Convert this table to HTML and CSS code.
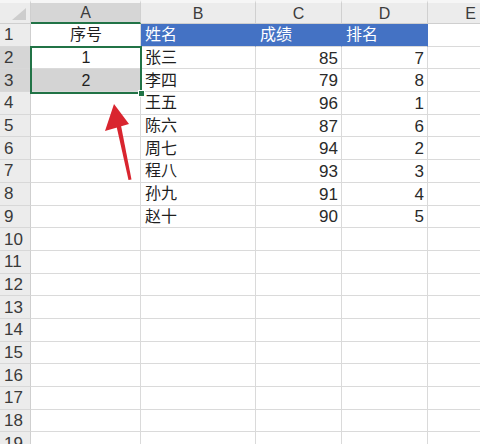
FILE: index.html
```html
<!DOCTYPE html>
<html lang="zh">
<head>
<meta charset="utf-8">
<link rel="stylesheet" href="styles.css">
</head>
<body>
<div class="sheet">
  <div class="grid">
    <div class="corner"><span class="tri"></span></div>
    <div class="ch sel">A</div><div class="ch">B</div><div class="ch">C</div><div class="ch">D</div><div class="ch">E</div>

    <div class="rh">1</div><div class="c ctr">序号</div><div class="c blue">姓名</div><div class="c blue">成绩</div><div class="c blue">排名</div><div class="c"></div>
    <div class="rh sel">2</div><div class="c ctr">1</div><div class="c">张三</div><div class="c num">85</div><div class="c num">7</div><div class="c"></div>
    <div class="rh sel">3</div><div class="c ctr shade">2</div><div class="c">李四</div><div class="c num">79</div><div class="c num">8</div><div class="c"></div>
    <div class="rh">4</div><div class="c"></div><div class="c">王五</div><div class="c num">96</div><div class="c num">1</div><div class="c"></div>
    <div class="rh">5</div><div class="c"></div><div class="c">陈六</div><div class="c num">87</div><div class="c num">6</div><div class="c"></div>
    <div class="rh">6</div><div class="c"></div><div class="c">周七</div><div class="c num">94</div><div class="c num">2</div><div class="c"></div>
    <div class="rh">7</div><div class="c"></div><div class="c">程八</div><div class="c num">93</div><div class="c num">3</div><div class="c"></div>
    <div class="rh">8</div><div class="c"></div><div class="c">孙九</div><div class="c num">91</div><div class="c num">4</div><div class="c"></div>
    <div class="rh">9</div><div class="c"></div><div class="c">赵十</div><div class="c num">90</div><div class="c num">5</div><div class="c"></div>
    <div class="rh">10</div><div class="c"></div><div class="c"></div><div class="c"></div><div class="c"></div><div class="c"></div>
    <div class="rh">11</div><div class="c"></div><div class="c"></div><div class="c"></div><div class="c"></div><div class="c"></div>
    <div class="rh">12</div><div class="c"></div><div class="c"></div><div class="c"></div><div class="c"></div><div class="c"></div>
    <div class="rh">13</div><div class="c"></div><div class="c"></div><div class="c"></div><div class="c"></div><div class="c"></div>
    <div class="rh">14</div><div class="c"></div><div class="c"></div><div class="c"></div><div class="c"></div><div class="c"></div>
    <div class="rh">15</div><div class="c"></div><div class="c"></div><div class="c"></div><div class="c"></div><div class="c"></div>
    <div class="rh">16</div><div class="c"></div><div class="c"></div><div class="c"></div><div class="c"></div><div class="c"></div>
    <div class="rh">17</div><div class="c"></div><div class="c"></div><div class="c"></div><div class="c"></div><div class="c"></div>
    <div class="rh">18</div><div class="c"></div><div class="c"></div><div class="c"></div><div class="c"></div><div class="c"></div>
    <div class="rh">19</div><div class="c"></div><div class="c"></div><div class="c"></div><div class="c"></div><div class="c"></div>
  </div>

  <div class="selection"><span class="handle"></span></div>

  <svg class="arrow" width="480" height="444" viewBox="0 0 480 444">
    <path d="M128.5 180 L116 124 L120.5 123 L131.5 179.5 Z" fill="#d9252f"/>
    <path d="M114 104 L105 131 L129 124 Z" fill="#d9252f"/>
  </svg>
</div>
</body>
</html>
```

FILE: styles.css
```css
* { box-sizing: border-box; }
html, body {
  margin: 0;
  padding: 0;
  background: #ffffff;
  overflow: hidden;
}
body {
  width: 480px;
  height: 444px;
  font-family: "Liberation Sans", "Noto Sans CJK SC", sans-serif;
  color: #1f1f1f;
}
.sheet {
  position: relative;
  width: 480px;
  height: 444px;
  overflow: hidden;
}
.grid {
  display: grid;
  grid-template-columns: 31px 110px 115px 86px 86px 86px;
  grid-template-rows: 24px;
  grid-auto-rows: 22.7px;
  width: 514px;
}
.corner {
  background: #ececec;
  border-right: 1px solid #cfcfcf;
  border-bottom: 1px solid #cfcfcf;
  border-top: 3px solid #f6f6f6;
  position: relative;
}
.tri {
  position: absolute;
  right: 4px;
  bottom: 3px;
  width: 0;
  height: 0;
  border-left: 14px solid transparent;
  border-bottom: 12px solid #cdcdcd;
}
.ch {
  background: #ececec;
  border-right: 1px solid #d0d0d0;
  border-bottom: 1px solid #cfcfcf;
  border-top: 3px solid #f6f6f6;
  font-size: 16px;
  color: #3c3c3c;
  display: flex;
  align-items: center;
  justify-content: center;
  line-height: 1;
  padding-top: 1px;
}
.ch.sel {
  background: #d6d6d6;
  border-bottom: 2px solid #217346;
}
.rh {
  background: #ececec;
  border-right: 1px solid #cfcfcf;
  border-bottom: 1px solid #d8d8d8;
  font-size: 17px;
  color: #3a3a3a;
  display: flex;
  align-items: center;
  padding-left: 4px;
  line-height: 1;
}
.rh.sel {
  background: #d6d6d6;
}
.c {
  border-right: 1px solid #dadada;
  border-bottom: 1px solid #dadada;
  font-size: 16px;
  display: flex;
  align-items: center;
  padding: 1px 3px 0 4px;
  line-height: 1;
  white-space: nowrap;
}
.c.ctr { justify-content: center; }
.c.num {
  justify-content: flex-end;
  font-size: 17px;
  padding-right: 3px;
  color: #2a2a2a;
}
.c.shade { background: #d4d4d4; }
.c.blue {
  background: #4472c4;
  color: #ffffff;
  border-right-color: #4472c4;
  border-bottom-color: #dadada;
}
.c.blue:nth-of-type(5n) { border-right-color: #4472c4; }
.selection {
  position: absolute;
  left: 30px;
  top: 46px;
  width: 112px;
  height: 48px;
  border: 2px solid #217346;
  pointer-events: none;
}
.handle {
  position: absolute;
  right: -5px;
  bottom: -5px;
  width: 7px;
  height: 7px;
  background: #217346;
  border: 1px solid #ffffff;
}
.arrow {
  position: absolute;
  left: 0;
  top: 0;
}
```
